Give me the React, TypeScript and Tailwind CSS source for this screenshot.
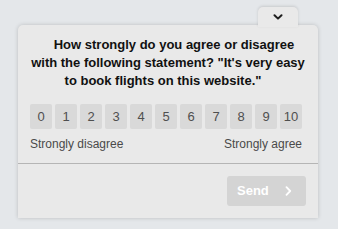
import React, { useState } from 'react';

const SCALE = [0, 1, 2, 3, 4, 5, 6, 7, 8, 9, 10];

const App: React.FC = () => {
  const [selected, setSelected] = useState<number | null>(null);

  return (
    <div
      className="w-full h-[229px] bg-[#e4e7ea] pl-[18px] pr-[20px] flex flex-col overflow-hidden"
      style={{ fontFamily: '"Liberation Sans", Arial, sans-serif' }}
    >
      {/* collapse tab */}
      <div className="self-end mr-[20px] mt-[7px] -mb-[2px] relative z-10 w-10 h-[20px] bg-[#e9e9e9] rounded-t-[5px] shadow-[0_-1px_3px_rgba(0,0,0,0.13)] flex justify-center pt-[7px]">
        <svg width="10" height="6" viewBox="0 0 10 6" fill="none">
          <path d="M1.5 1.2 L5 4.6 L8.5 1.2" stroke="#1e1e1e" strokeWidth="2" strokeLinecap="round" strokeLinejoin="round" />
        </svg>
      </div>

      <div className="h-[193px] bg-[#e9e9e9] rounded-t-[5px] shadow-[0_0_4px_rgba(0,0,0,0.18)] flex flex-col">
        <p className="px-[10px] pt-[11px] text-center text-[13px] leading-[18px] font-bold text-[#111]">
          <span className="inline-block w-[12px]" />
          How strongly do you agree or disagree with the following statement? "It's very easy to book flights on this website."
          <span className="inline-block w-[10px]" />
        </p>

        <div className="px-3 mt-[14px]">
          <div className="w-[272px] flex gap-[3px]">
            {SCALE.map((n) => (
              <button
                key={n}
                onClick={() => setSelected(n)}
                className={`w-[22px] h-[25px] rounded-[2px] text-[13px] flex items-center justify-center ${
                  selected === n ? 'bg-[#bdbdbd] text-[#222]' : 'bg-[#d9d9d9] text-[#4f4f4f]'
                }`}
              >
                {n}
              </button>
            ))}
          </div>
          <div className="w-[272px] flex justify-between mt-[7px] text-[12px] leading-[16px] text-[#4a4a4a]">
            <span>Strongly disagree</span>
            <span>Strongly agree</span>
          </div>
        </div>

        <div className="mt-[11px] h-px bg-[#b5b5b5]" />

        <div className="flex justify-end px-3 pt-[12px]">
          <button className="w-[79px] h-[30px] rounded-[3px] bg-[#d4d4d4] flex items-center pl-[10px] text-white text-[13px] font-bold">
            Send
            <svg className="ml-[16px]" width="7" height="10" viewBox="0 0 7 10" fill="none">
              <path d="M1.5 1.2 L5.2 5 L1.5 8.8" stroke="#ffffff" strokeWidth="1.8" strokeLinecap="round" strokeLinejoin="round" />
            </svg>
          </button>
        </div>
      </div>
    </div>
  );
};

export default App;
